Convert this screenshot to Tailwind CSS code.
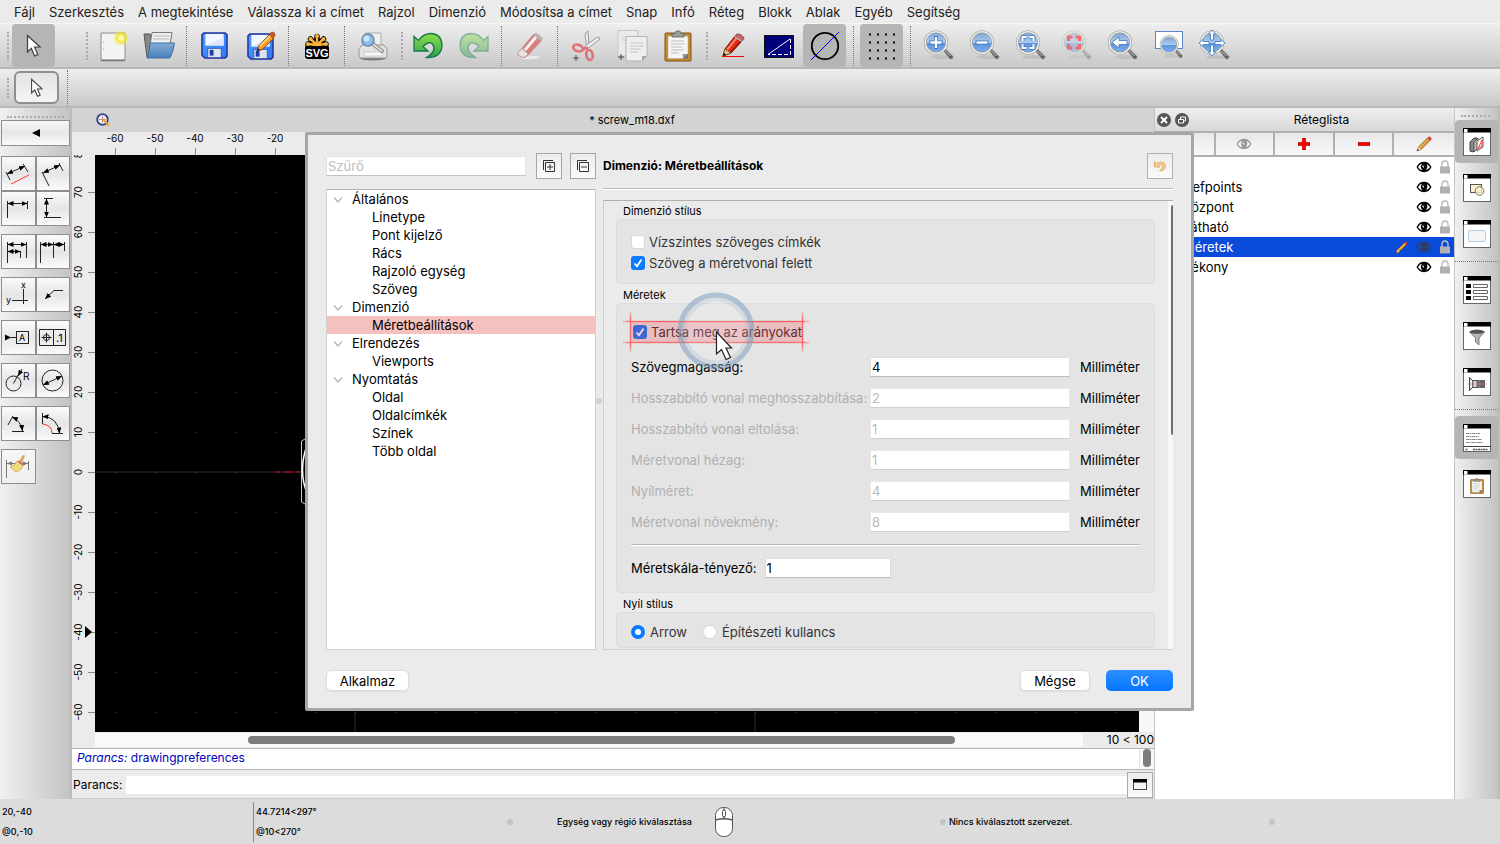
<!DOCTYPE html>
<html lang="hu">
<head>
    <meta charset="UTF-8">
    <meta name="viewport" content="width=device-width, initial-scale=1.0">
    <title>screw_m18.dxf</title>
    <script src="https://cdn.jsdelivr.net/npm/@tailwindcss/browser@4"></script>
    <style>
        body {
            font-family: 'Inter', 'Liberation Sans', sans-serif;
        }
    </style>
</head>
<body class="relative flex h-screen flex-col overflow-hidden bg-[#ebebeb] text-[13px] leading-[18px] text-black">

    <!-- Shared symbols -->
    <svg class="absolute h-0 w-0" aria-hidden="true">
        <defs>
            <linearGradient id="lens" x1="0" y1="0" x2="0" y2="1">
                <stop offset="0" stop-color="#7f9fd0"/><stop offset=".5" stop-color="#a9cbf2"/><stop offset=".52" stop-color="#5e93da"/><stop offset="1" stop-color="#7db2f0"/>
            </linearGradient>
            <linearGradient id="floppy" x1="0" y1="0" x2="1" y2="1">
                <stop offset="0" stop-color="#4f9bff"/><stop offset="1" stop-color="#2a7af5"/>
            </linearGradient>
            <linearGradient id="green" x1="0" y1="0" x2="0" y2="1">
                <stop offset="0" stop-color="#8fe04a"/><stop offset="1" stop-color="#2fa050"/>
            </linearGradient>
            <linearGradient id="folder" x1="0" y1="0" x2="0" y2="1">
                <stop offset="0" stop-color="#82add6"/><stop offset="1" stop-color="#4a80b8"/>
            </linearGradient>
            <radialGradient id="glow">
                <stop offset="0" stop-color="#fffbc8"/><stop offset=".4" stop-color="#f2e625"/><stop offset="1" stop-color="#f2e625" stop-opacity="0"/>
            </radialGradient>
            <marker id="arr" viewBox="0 0 6 5" refX="6" refY="2.500" markerWidth="6" markerHeight="5" markerUnits="userSpaceOnUse" orient="auto-start-reverse"><path d="M0 0 6 2.500 0 5z"/></marker>
            <symbol id="glass" viewBox="0 0 32 32">
                <ellipse cx="18" cy="27" rx="11" ry="2" fill="#000" opacity=".08"/>
                <path d="M20 20 22 18.500 30 26.500Q30 29.500 27 29Z" fill="#5f605a" stroke="#8b8c86" stroke-width=".8"/>
                <path d="M22.500 21 27.500 26" stroke="#c9cac4" stroke-width="1"/>
                <circle cx="13" cy="12.500" r="10.800" fill="url(#lens)" stroke="#8f918a" stroke-width="2.600"/>
                <circle cx="13" cy="12.500" r="10.800" fill="none" stroke="#e9eae4" stroke-width="1.600"/>
            </symbol>
            <symbol id="eye" viewBox="0 0 16 12">
                <path d="M.5 6Q3 .8 8 .8T15.500 6Q13 11.200 8 11.200T.5 6z" fill="currentColor"/>
                <path d="M2 6Q4.200 2.800 6 2.700 4 5 5 7.300 5.600 8.800 7 9.300 3.800 9.200 2 6zM14 6Q12.500 3.800 10.800 3 12 5 11 7.300 10.500 8.600 9.300 9.200 12.400 8.800 14 6z" fill="#fff"/>
                <path d="M7 4.500Q6.700 5.800 8 6.300" stroke="#fff" fill="none" stroke-width="1.100"/>
            </symbol>
            <symbol id="lock" viewBox="0 0 10 14">
                <path d="M2 7V4.500Q2 1 5 1T8 4.500V7" fill="none" stroke="#bdbdbd" stroke-width="1.400"/>
                <rect y="6.500" width="10" height="7" fill="#b1b1b1"/>
            </symbol>
            <symbol id="pencil" viewBox="0 0 16 16">
                <path d="M1 15 2.500 11 11.500 2 14 4.500 5 13.500z" fill="#e0962c" stroke="#7d4b12" stroke-width=".7"/>
                <path d="M3.500 12 12.500 3" stroke="#f5c678"/>
                <path d="M1 15 2.500 11 5 13.500z" fill="#ecd0a5"/><path d="M1 15 1.700 13 3 14.300z" fill="#222"/>
                <path d="M11.500 2 13 .8Q15.500 1 15.200 3.200L14 4.500z" fill="#e84040" stroke="#a33" stroke-width=".5"/>
            </symbol>
            <symbol id="cursor" viewBox="0 0 16 24">
                <path d="M1.500 1.500V18L5.300 14.400 8.600 22 11.800 20.600 8.600 13.200 14 13z" fill="#fff" stroke="#444" stroke-width="1.300"/>
            </symbol>
            <symbol id="clip" viewBox="0 0 28 32">
                <rect x="1" y="3" width="26" height="28" rx="1" fill="#c48a2f" stroke="#7d5515"/>
                <path d="M4 6H24V24L19 28.500H4z" fill="#f6f6f4" stroke="#a9a498" stroke-width=".6"/>
                <path d="M24 24 19 28.500 18.500 24z" fill="#999"/><path d="M24 24V28.500H19z" fill="#6f6f6f"/>
                <path d="M7 11H20M7 14H21M7 17H18M7 20H20M7 23H15" stroke="#bbb"/>
                <path d="M8 3.500H11Q11 .8 14 .8T17 3.500H20V7H8z" fill="#9b9d94" stroke="#60625a" stroke-width=".8"/>
            </symbol>
            <symbol id="floppy-disk" viewBox="0 0 28 28">
                <path d="M3 1H25L27 3V25L25 27H4L1 24V3z" fill="url(#floppy)" stroke="#1f2f9c" stroke-width="1.500"/>
                <path d="M4.500 2H23.500V14H4.500z" fill="#f2f6ff"/><path d="M4.500 14 23.500 6V14z" fill="#dde6fa"/>
                <path d="M7 17H21V26.500H7z" fill="#dfe3ee" stroke="#2d49b8" stroke-width=".8"/>
                <path d="M9 18.500H13V24.500H9z" fill="#1d3cae"/>
            </symbol>
            <symbol id="win" viewBox="0 0 28 28">
                <rect x=".5" y=".5" width="27" height="27" fill="#fff" stroke="#666"/>
                <path d="M0 0H28V4.500H0z"/><path d="M1 1H4.500V4.500H1z" fill="#fff"/>
            </symbol>
        </defs>
    </svg>

    <!-- Menu bar -->
    <nav class="flex h-6 shrink-0 items-center gap-[14px] border-b border-[#f6f6f6] px-[14px] text-[#222]">
        <a href="#">Fájl</a>
        <a href="#">Szerkesztés</a>
        <a href="#">A megtekintése</a>
        <a href="#">Válassza ki a címet</a>
        <a href="#">Rajzol</a>
        <a href="#">Dimenzió</a>
        <a href="#">Módosítsa a címet</a>
        <a href="#">Snap</a>
        <a href="#">Infó</a>
        <a href="#">Réteg</a>
        <a href="#">Blokk</a>
        <a href="#">Ablak</a>
        <a href="#">Egyéb</a>
        <a href="#">Segítség</a>
    </nav>

    <!-- Main toolbar -->
    <div role="toolbar" class="flex h-[45px] shrink-0 items-center gap-[3px] border-b-2 border-[#b8b8b8] bg-linear-to-b from-[#eeeeee] to-[#c9c9c9] pl-[7px]">
        <div class="h-7 w-[2px] border-l-2 border-dotted border-[#aaa]"></div>
        <button aria-label="Kijelölés" class="grid h-[43px] w-[43px] shrink-0 place-items-center rounded-[4px] bg-[#b5b5b5]"><svg class="h-6 w-4"><use href="#cursor"/></svg></button>
        <div class="ml-6 flex h-7 w-[6px] justify-end"><div class="w-[2px] border-l-2 border-dotted border-[#aaa]"></div></div>
        <button aria-label="Új" class="grid h-[43px] w-[43px] shrink-0 place-items-center">
            <svg class="h-8 w-8" viewBox="0 0 32 32"><path d="M4 3H28V30H4z" fill="#f3f3f1" stroke="#8f8f88"/><path d="M4 30.500H28" stroke="#777" stroke-width="1.500"/><path d="M6.500 11V13M6.500 18V20" stroke="#ccc"/><circle cx="24" cy="8" r="8" fill="url(#glow)"/><circle cx="24" cy="8" r="3" fill="#fff9a0"/></svg>
        </button>
        <button aria-label="Megnyitás" class="grid h-[43px] w-[43px] shrink-0 place-items-center">
            <svg class="h-8 w-8" viewBox="0 0 32 32"><path d="M1 4H7L8 7H12V27H4z" fill="#888" stroke="#555"/><path d="M9 2.500H29L26 22H6z" fill="#eee" stroke="#777"/><path d="M11 6H27M10 9H26" stroke="#bbb"/><path d="M7 13H31.500Q30 22 27.500 27 27 28 26 28H4Q6 24 7 13z" fill="url(#folder)" stroke="#3d6ea5"/></svg>
        </button>
        <div class="flex h-10 w-[7px] justify-center"><div class="border-l border-dotted border-[#777]"></div></div>
        <button aria-label="Mentés" class="grid h-[43px] w-[43px] shrink-0 place-items-center"><svg class="h-[27px] w-[27px]"><use href="#floppy-disk"/></svg></button>
        <button aria-label="Mentés másként" class="grid h-[43px] w-[43px] shrink-0 place-items-center">
            <svg class="h-8 w-8" viewBox="0 0 32 32"><use href="#floppy-disk" x="2" y="3" width="27" height="27"/><path d="M12 21 13.500 16 25 4 29 8 17 19.500z" fill="#f6a42c" stroke="#8a3b10"/><path d="M15 16 26 5" stroke="#fde08a" stroke-width="1.500"/><path d="M24 4.500 27 2Q30 2 30 5.500L28 8z" fill="#d8571c" stroke="#8a3b10" stroke-width=".7"/><path d="M12 21 13 18 15 20z" fill="#222"/></svg>
        </button>
        <div class="flex h-10 w-[7px] justify-center"><div class="border-l border-dotted border-[#777]"></div></div>
        <button aria-label="SVG" class="grid h-[43px] w-[43px] shrink-0 place-items-center">
            <svg class="h-8 w-8" viewBox="0 0 32 32">
                <g stroke="#000" stroke-width="5.500" stroke-linecap="round"><path d="M16 16V6.500M16 16 9.500 9M16 16 22.500 9M16 16 7 14M16 16 25 14"/></g>
                <path d="M7 15H25Q28 15 28 18V26Q28 29 25 29H7Q4 29 4 26V18Q4 15 7 15z"/>
                <g stroke="#f9b13a" stroke-width="2.400" stroke-linecap="round"><path d="M16 15V6M16 15 9.500 9M16 15 22.500 9M16 15 7 14M16 15 25 14"/></g>
                <g fill="#f9b13a"><circle cx="16" cy="6" r="2"/><circle cx="9.500" cy="9" r="2"/><circle cx="22.500" cy="9" r="2"/><circle cx="7" cy="14" r="2"/><circle cx="25" cy="14" r="2"/></g>
                <path d="M5 16.500H27V28H5z"/>
                <text x="16" y="27" font-size="11" font-weight="700" fill="#fff" text-anchor="middle" font-family="Liberation Sans">SVG</text>
            </svg>
        </button>
        <div class="flex h-10 w-[7px] justify-center"><div class="border-l border-dotted border-[#777]"></div></div>
        <button aria-label="Nyomtatási kép" class="grid h-[43px] w-[43px] shrink-0 place-items-center">
            <svg class="h-8 w-8" viewBox="0 0 32 32"><ellipse cx="16" cy="28" rx="13" ry="2.500" fill="#777"/><path d="M8 3H24V17H8z" fill="#eee" stroke="#aaa"/><path d="M5 15H27L30 19V26Q30 28 28 28H4Q2 28 2 26V19z" fill="#e3e3e1" stroke="#999"/><path d="M7 22H25V26H7z" fill="#f7f7f7" stroke="#bbb" stroke-width=".6"/><path d="M16 14 25 21" stroke="#888" stroke-width="4" stroke-linecap="round"/><path d="M16 14 25 21" stroke="#ddd" stroke-width="2" stroke-linecap="round"/><circle cx="11" cy="10" r="6" fill="#8dbdeb" stroke="#6a86ad" stroke-width="1.500"/><circle cx="9.500" cy="8.500" r="3" fill="#cfe5fa"/></svg>
        </button>
        <div class="flex h-7 w-[6px] justify-end"><div class="w-[2px] border-l-2 border-dotted border-[#aaa]"></div></div>
        <button aria-label="Visszavonás" class="grid h-[43px] w-[43px] shrink-0 place-items-center">
            <svg class="h-8 w-8" viewBox="0 0 32 32"><path d="M2 6.500V21H16L11 16.500Q17 10.500 20.500 14 25.500 20.500 14.500 27.500 30 28 30 14.500 29 3.500 18.500 3.500 11 4 6.500 10.500z" fill="url(#green)" stroke="#137a45" stroke-width="1.300"/></svg>
        </button>
        <button aria-label="Újra" class="grid h-[43px] w-[43px] shrink-0 place-items-center">
            <svg class="h-8 w-8 -scale-x-100 opacity-45" viewBox="0 0 32 32"><path d="M2 6.500V21H16L11 16.500Q17 10.500 20.500 14 25.500 20.500 14.500 27.500 30 28 30 14.500 29 3.500 18.500 3.500 11 4 6.500 10.500z" fill="url(#green)" stroke="#137a45" stroke-width="1.300"/></svg>
        </button>
        <div class="flex h-10 w-[7px] justify-center"><div class="border-l border-dotted border-[#777]"></div></div>
        <button aria-label="Törlés" class="grid h-[43px] w-[43px] shrink-0 place-items-center">
            <svg class="h-8 w-8 opacity-60" viewBox="0 0 32 32"><path d="M6 28Q18 31 27 27 20 25 12 27z" fill="#fff"/><path d="M4 23 19 5Q21 3 23 4L27 7Q29 9 27 11L12 27Q9 28 6 26 3 25 4 23z" fill="#e0403c" stroke="#a55"/><path d="M11 20 22 7" stroke="#fff" stroke-width="3"/><path d="M4 23 8 18.500 14 24 11.500 27Q9 28 6 26 3 25 4 23z" fill="#f4eded" stroke="#b88"/><path d="M19 5Q21 3 23 4L27 7Q29 9 27 11z" fill="#999"/></svg>
        </button>
        <div class="flex h-10 w-[7px] justify-center"><div class="border-l border-dotted border-[#777]"></div></div>
        <button aria-label="Kivágás" class="grid h-[43px] w-[43px] shrink-0 place-items-center">
            <svg class="h-8 w-8" viewBox="0 0 32 32"><path d="M17 18 15 6Q15 2 18 1L19 17z" fill="#eee" stroke="#999"/><path d="M15 16 26 8Q30 6 30 9L17 19z" fill="#eee" stroke="#999"/><ellipse cx="8" cy="18" rx="5" ry="3.200" transform="rotate(20 8 18)" fill="none" stroke="#df7376" stroke-width="2.600"/><ellipse cx="19.500" cy="25" rx="3.200" ry="5" transform="rotate(-10 19.500 25)" fill="none" stroke="#df7376" stroke-width="2.600"/><path d="M12 19 18 18" stroke="#df7376" stroke-width="3"/><path d="M6 25V31M3 28H9" stroke="#444"/></svg>
        </button>
        <button aria-label="Másolás" class="grid h-[43px] w-[43px] shrink-0 place-items-center">
            <svg class="h-8 w-8" viewBox="0 0 32 32"><path d="M2 .5H22V26H2z" fill="#ebebeb" stroke="#c4c4c4"/><path d="M5 7H18M5 10H18" stroke="#d2d2d2"/><path d="M10 6.500H31V26L26 31H10z" fill="#efefef" stroke="#b3b3b3"/><path d="M31 26H26V31z" fill="#aaa"/><path d="M14 13H27M14 16H28M14 19H25M14 22H22" stroke="#c4c4c4"/><path d="M5 24V30M2 27H8" stroke="#444"/></svg>
        </button>
        <button aria-label="Beillesztés" class="grid h-[43px] w-[43px] shrink-0 place-items-center"><svg class="h-8 w-7"><use href="#clip"/></svg></button>
        <div class="flex h-7 w-[6px] justify-end"><div class="w-[2px] border-l-2 border-dotted border-[#aaa]"></div></div>
        <button aria-label="Rajz" class="grid h-[43px] w-[43px] shrink-0 place-items-center">
            <svg class="h-8 w-8" viewBox="0 0 32 32"><path d="M6 26 8 19 18 6 25 11 14 23z" fill="#e32a17" stroke="#6b150c"/><path d="M10 20 20 7.500" stroke="#f88a6a" stroke-width="2"/><path d="M13 23 24 11" stroke="#9d160c" stroke-width="1.500"/><path d="M6 26 8 19 14 23z" fill="#e3c08a" stroke="#6b4a20" stroke-width=".7"/><path d="M6 26 7 23 9 24.500z"/><path d="M18 6 20 4Q25 4 27 8.500L25 11z" fill="#e35b5b" stroke="#555"/><path d="M17.500 6.500 25 11.500" stroke="#bbb" stroke-width="1.500"/><path d="M5 26.500H27" stroke="#f00"/></svg>
        </button>
        <button aria-label="Vázlat" class="grid h-[43px] w-[43px] shrink-0 place-items-center">
            <svg class="h-8 w-8" viewBox="0 0 32 32"><rect x="1.500" y="5.500" width="29" height="22" fill="#00007f" stroke="#111"/><path d="M5 24.500 27 9" stroke="#fff"/><path d="M27.500 9V24.500H5" stroke="#fff" stroke-dasharray="4 2" fill="none"/></svg>
        </button>
        <button aria-label="Átmérő" class="grid h-[43px] w-[43px] shrink-0 place-items-center rounded-[4px] bg-[#b5b5b5]">
            <svg class="h-8 w-8" viewBox="0 0 32 32"><circle cx="16" cy="16" r="13.200" fill="none" stroke="#000" stroke-width="1.800"/><path d="M2 30 30 2" stroke="#00f"/></svg>
        </button>
        <div class="flex h-10 w-2 justify-center"><div class="border-l border-dotted border-[#777]"></div></div>
        <button aria-label="Rács" class="grid h-[43px] w-[43px] shrink-0 place-items-center rounded-[4px] bg-[#b5b5b5]">
            <svg class="h-8 w-8" viewBox="0 0 32 32"><path d="M3 4.500H31M3 12.500H31M3 20.500H31M3 28.500H31" stroke="#000" stroke-width="2" stroke-dasharray="2 6"/></svg>
        </button>
        <div class="flex h-10 w-2 justify-center"><div class="border-l border-dotted border-[#777]"></div></div>
        <button aria-label="Nagyítás" class="grid h-[43px] w-[43px] shrink-0 place-items-center">
            <svg class="h-8 w-8" viewBox="0 0 32 32"><use href="#glass"/><path d="M13 6V19M6.500 12.500H19.500" stroke="#3e73b8" stroke-width="4"/><path d="M13 7V18M7.500 12.500H18.500" stroke="#fff" stroke-width="2.400"/></svg>
        </button>
        <button aria-label="Kicsinyítés" class="grid h-[43px] w-[43px] shrink-0 place-items-center">
            <svg class="h-8 w-8" viewBox="0 0 32 32"><use href="#glass"/><path d="M6.500 12.500H19.500" stroke="#3e73b8" stroke-width="4"/><path d="M7.500 12.500H18.500" stroke="#fff" stroke-width="2.400"/></svg>
        </button>
        <button aria-label="Automatikus nagyítás" class="grid h-[43px] w-[43px] shrink-0 place-items-center">
            <svg class="h-8 w-8" viewBox="0 0 32 32"><use href="#glass"/><path d="M7.500 11V7H11.500M14.500 7H18.500V11M18.500 14V18H14.500M11.500 18H7.500V14" fill="none" stroke="#3e73b8" stroke-width="3.600"/><path d="M7.500 11V7H11.500M14.500 7H18.500V11M18.500 14V18H14.500M11.500 18H7.500V14" fill="none" stroke="#fff" stroke-width="2"/></svg>
        </button>
        <button aria-label="Nagyítás a kijelölésre" class="grid h-[43px] w-[43px] shrink-0 place-items-center">
            <svg class="h-8 w-8 opacity-60" viewBox="0 0 32 32"><use href="#glass" opacity=".7"/><path d="M7.500 11V7H11.500M14.500 7H18.500V11M18.500 14V18H14.500M11.500 18H7.500V14" fill="none" stroke="#f22" stroke-width="3"/></svg>
        </button>
        <button aria-label="Előző nézet" class="grid h-[43px] w-[43px] shrink-0 place-items-center">
            <svg class="h-8 w-8" viewBox="0 0 32 32"><use href="#glass"/><path d="M5 12.500 12 7V10.500H20V14.500H12V18z" fill="#fff" stroke="#3e73b8" stroke-width=".8"/></svg>
        </button>
        <button aria-label="Ablak nagyítása" class="grid h-[43px] w-[43px] shrink-0 place-items-center">
            <svg class="h-8 w-8" viewBox="0 0 32 32"><rect x="2.500" y="1.500" width="27" height="17" fill="#fff" stroke="#5b86c4"/><use href="#glass" x="6" y="5" width="25" height="25"/></svg>
        </button>
        <button aria-label="Mozgatás" class="grid h-[43px] w-[43px] shrink-0 place-items-center">
            <svg class="h-8 w-8" viewBox="0 0 32 32"><use href="#glass"/><path d="M13 0 16.500 4H14.500V10H11.500V4H9.500zM13 26 16.500 22H14.500V15H11.500V22H9.500zM0 13 4 9.500V11.500H10V14.500H4V16.500zM26 13 22 9.500V11.500H16V14.500H22V16.500z" fill="#fff" stroke="#4a80c8" stroke-width=".9"/></svg>
        </button>
    </div>

    <!-- Options toolbar -->
    <div role="toolbar" class="flex h-[39px] shrink-0 items-center border-b-2 border-[#b8b8b8] bg-linear-to-b from-[#eeeeee] to-[#c9c9c9] pl-[7px]">
        <div class="h-5 w-[7px] border-l-2 border-dotted border-[#aaa]"></div>
        <button aria-label="Kijelölés" class="grid h-[33px] w-[45px] place-items-center rounded-[6px] border-2 border-[#8e8e8e] bg-linear-to-b from-[#e4e4e4] to-[#f4f4f4]"><svg class="h-5 w-3.5"><use href="#cursor"/></svg></button>
        <div class="ml-2 h-9 border-l border-dotted border-[#777]"></div>
    </div>

    <!-- Work area -->
    <main class="flex min-h-0 flex-1">

        <!-- Dimension tools -->
        <aside class="w-[72px] shrink-0 border-r-2 border-[#bbb] bg-linear-to-r from-[#f0f0f0] to-[#c3c3c3] pt-2 pl-px">
            <div class="mx-1.5 border-t-2 border-dotted border-[#aaa]"></div>
            <button aria-label="Vissza" class="mt-[2px] grid h-[26px] w-full place-items-center border border-[#8e8e8e] bg-linear-to-b from-[#f6f6f6] via-[#e6e6e6] to-[#fafafa]"><svg class="h-2 w-2" viewBox="0 0 8 8"><path d="M0 4 8 0V8z"/></svg></button>
            <div class="mt-[10px] grid grid-cols-2">
                <button aria-label="Igazított" class="grid h-[35px] place-items-center border border-[#8e8e8e] bg-linear-to-b from-[#fafafa] via-[#e6e6e6] to-[#fafafa]"><svg class="h-7 w-7" viewBox="0 0 28 28"><g stroke="#222" fill="none"><path d="M2 12 6 20M19 4 24 12"/><path d="M3 14 21 6" marker-start="url(#arr)" marker-end="url(#arr)"/></g><path d="M7 24 25 15" stroke="#f33"/></svg></button>
                <button aria-label="Elforgatott" class="grid h-[35px] place-items-center border border-[#8e8e8e] bg-linear-to-b from-[#fafafa] via-[#e6e6e6] to-[#fafafa]"><svg class="h-7 w-7" viewBox="0 0 28 28"><g stroke="#222" fill="none"><path d="M3 12 10 26M20 3 24 11"/><path d="M4 13 21 5" marker-start="url(#arr)" marker-end="url(#arr)"/></g></svg></button>
                <button aria-label="Vízszintes" class="grid h-[35px] place-items-center border border-[#8e8e8e] bg-linear-to-b from-[#fafafa] via-[#e6e6e6] to-[#fafafa]"><svg class="h-7 w-7" viewBox="0 0 28 28"><g stroke="#222" fill="none"><path d="M3.500 6V23M23.500 6V14"/><path d="M3.500 8.500H23.500" marker-start="url(#arr)" marker-end="url(#arr)"/></g></svg></button>
                <button aria-label="Függőleges" class="grid h-[35px] place-items-center border border-[#8e8e8e] bg-linear-to-b from-[#fafafa] via-[#e6e6e6] to-[#fafafa]"><svg class="h-7 w-7" viewBox="0 0 28 28"><g stroke="#222" fill="none"><path d="M5 3.500H14M5 22.500H22"/><path d="M7.500 3.500V22.500" marker-start="url(#arr)" marker-end="url(#arr)"/></g></svg></button>
            </div>
            <div class="mt-2 grid grid-cols-2">
                <button aria-label="Alapvonal" class="grid h-[35px] place-items-center border border-[#8e8e8e] bg-linear-to-b from-[#fafafa] via-[#e6e6e6] to-[#fafafa]"><svg class="h-7 w-7" viewBox="0 0 28 28"><g stroke="#222" fill="none"><path d="M3.500 4V25M22.500 4V20M16.500 13V20"/><path d="M3.500 6.500H22.500" marker-start="url(#arr)" marker-end="url(#arr)"/><path d="M3.500 13.500H16.500" marker-start="url(#arr)" marker-end="url(#arr)"/></g></svg></button>
                <button aria-label="Folytatott" class="grid h-[35px] place-items-center border border-[#8e8e8e] bg-linear-to-b from-[#fafafa] via-[#e6e6e6] to-[#fafafa]"><svg class="h-7 w-7" viewBox="0 0 28 28"><g stroke="#222" fill="none"><path d="M1.500 4V25M14.500 4V20M25.500 4V13"/><path d="M1.500 6.500H14.500" marker-start="url(#arr)" marker-end="url(#arr)"/><path d="M14.500 6.500H25.500" marker-start="url(#arr)" marker-end="url(#arr)"/></g></svg></button>
            </div>
            <div class="mt-2 grid grid-cols-2">
                <button aria-label="Ordináta" class="grid h-[35px] place-items-center border border-[#8e8e8e] bg-linear-to-b from-[#fafafa] via-[#e6e6e6] to-[#fafafa]"><svg class="h-[33px] w-8" viewBox="0 0 32 33"><path d="M10 22.500H26M21.500 11V26" stroke="#222"/><text x="19" y="10" font-size="9">x</text><text x="4" y="25" font-size="9">y</text></svg></button>
                <button aria-label="Mutató" class="grid h-[35px] place-items-center border border-[#8e8e8e] bg-linear-to-b from-[#fafafa] via-[#e6e6e6] to-[#fafafa]"><svg class="h-7 w-7" viewBox="0 0 28 28"><path d="M24 9.500H15L6 18" stroke="#222" fill="none" marker-end="url(#arr)"/></svg></button>
            </div>
            <div class="mt-2 grid grid-cols-2">
                <button aria-label="Alapelem" class="grid h-[35px] place-items-center border border-[#8e8e8e] bg-linear-to-b from-[#fafafa] via-[#e6e6e6] to-[#fafafa]"><svg class="h-7 w-7" viewBox="0 0 28 28"><path d="M1 10.500 7 13.500 1 16.500z"/><g stroke="#222" fill="none"><path d="M6 13.500H12"/><rect x="12.500" y="7.500" width="12" height="12"/></g><text x="15" y="17" font-size="9">A</text></svg></button>
                <button aria-label="Tűrés" class="grid h-[35px] place-items-center border border-[#8e8e8e] bg-linear-to-b from-[#fafafa] via-[#e6e6e6] to-[#fafafa]"><svg class="h-7 w-7" viewBox="0 0 28 28"><g stroke="#222" fill="none"><path d="M.5 5.500H26.500V21.500H.5zM14.500 5.500V21.500M2.500 13.500H12.500M7.500 8.500V18.500"/><circle cx="7.500" cy="13.500" r="3"/></g><text x="17" y="18" font-size="11">.1</text></svg></button>
            </div>
            <div class="mt-2 grid grid-cols-2">
                <button aria-label="Sugár" class="grid h-[35px] place-items-center border border-[#8e8e8e] bg-linear-to-b from-[#fafafa] via-[#e6e6e6] to-[#fafafa]"><svg class="h-7 w-7" viewBox="0 0 28 28"><g stroke="#222" fill="none"><circle cx="9.500" cy="16.500" r="7.500"/><path d="M9.500 16.500 14 8"/><path d="M18 2 14 9" marker-end="url(#arr)"/></g><text x="19" y="13" font-size="10">R</text></svg></button>
                <button aria-label="Átmérő" class="grid h-[35px] place-items-center border border-[#8e8e8e] bg-linear-to-b from-[#fafafa] via-[#e6e6e6] to-[#fafafa]"><svg class="h-7 w-7" viewBox="0 0 28 28"><g stroke="#222" fill="none"><circle cx="13.500" cy="13.500" r="10.500"/><path d="M4 18 23 9" marker-start="url(#arr)" marker-end="url(#arr)"/></g></svg></button>
            </div>
            <div class="mt-2 grid grid-cols-2">
                <button aria-label="Szög" class="grid h-[35px] place-items-center border border-[#8e8e8e] bg-linear-to-b from-[#fafafa] via-[#e6e6e6] to-[#fafafa]"><svg class="h-7 w-7" viewBox="0 0 28 28"><g stroke="#222" fill="none"><path d="M4 15 9 6M8 21.500H20"/><path d="M8 7Q17 11 18.500 21" marker-start="url(#arr)" marker-end="url(#arr)"/></g></svg></button>
                <button aria-label="Ívhossz" class="grid h-[35px] place-items-center border border-[#8e8e8e] bg-linear-to-b from-[#fafafa] via-[#e6e6e6] to-[#fafafa]"><svg class="h-7 w-7" viewBox="0 0 28 28"><g stroke="#222" fill="none"><path d="M3.500 3V14M13 23.500H24"/><path d="M3.500 6.500Q19 7 20.500 23.500" marker-start="url(#arr)" marker-end="url(#arr)"/></g><path d="M3.500 14Q13 15 13 23" stroke="#f33" fill="none"/></svg></button>
            </div>
            <div class="mt-2 grid grid-cols-2">
                <button aria-label="Tisztítás" class="grid h-[35px] place-items-center border border-[#8e8e8e] bg-linear-to-b from-[#f6f6f6] to-[#efefef]"><svg class="h-7 w-7" viewBox="0 0 28 28"><g stroke="#777" fill="#777"><path d="M2.500 7V25M24.500 8V17M2.500 10.500H24.500"/><path d="M3 10.500 8 8.500V12.500zM24 10.500 19 8.500V12.500z" stroke="none"/></g><path d="M15 9 18 3Q20 1 21 3L18 10z" fill="#d9a86a"/><path d="M13 8 19 12Q18 17 12 19L6 14Q11 13 13 8z" fill="#f0dc7e" stroke="#c9ac44" stroke-width=".8"/><path d="M14 8 19.500 12" stroke="#d66" stroke-width="1.800"/></svg></button>
            </div>
        </aside>

        <!-- Document -->
        <section class="flex min-w-0 flex-1 flex-col">
            <div class="grid h-6 shrink-0 grid-cols-[1fr_auto_1fr] items-center bg-[#d3d3d3] pl-6 text-[11px]">
                <svg class="h-[14px] w-[14px]" viewBox="0 0 14 14"><circle cx="6.500" cy="6.500" r="5.300" fill="#f4f4f8" stroke="#2f4585" stroke-width="1.800"/><path d="M6.500 3V10M3 6.500H10" stroke="#c88"/><path d="M7 6 13 13" stroke="#f0a030" stroke-width="2"/></svg>
                <span class="pl-[14px]">* screw_m18.dxf</span>
            </div>
            <div class="grid min-h-0 flex-1 grid-cols-[23px_1fr_15px] grid-rows-[23px_1fr_16px]">
                <div></div>
                <svg class="h-full w-full" font-size="10" text-anchor="middle">
                    <text x="20" y="10">-60</text><text x="60" y="10">-50</text><text x="100" y="10">-40</text><text x="140" y="10">-30</text><text x="180" y="10">-20</text>
                    <path d="M20.500 16V23M60.500 16V23M100.500 16V23M140.500 16V23M180.500 16V23" stroke="#888"/>
                </svg>
                <div></div>
                <svg class="h-full w-full" font-size="10" text-anchor="middle">
                    <g transform="rotate(-90)">
                        <text x="3" y="10">80</text><text x="-37" y="10">70</text><text x="-77" y="10">60</text><text x="-117" y="10">50</text><text x="-157" y="10">40</text><text x="-197" y="10">30</text><text x="-237" y="10">20</text><text x="-277" y="10">10</text><text x="-317" y="10">0</text><text x="-357" y="10">-10</text><text x="-397" y="10">-20</text><text x="-437" y="10">-30</text><text x="-477" y="10">-40</text><text x="-517" y="10">-50</text><text x="-557" y="10">-60</text>
                    </g>
                    <path d="M16 37.500H23M16 77.500H23M16 117.500H23M16 157.500H23M16 197.500H23M16 237.500H23M16 277.500H23M16 317.500H23M16 357.500H23M16 397.500H23M16 437.500H23M16 477.500H23M16 517.500H23M16 557.500H23" stroke="#888"/>
                    <path d="M13 471 20 477 13 483z"/>
                </svg>
                <svg class="h-full w-full bg-black">
                    <defs><pattern id="dots" width="40" height="40" x="20" y="37" patternUnits="userSpaceOnUse"><rect width="1" height="1" fill="#444"/></pattern></defs>
                    <path d="M0 317H900M260 0V900M660 0V900" stroke="#161616" stroke-width="2"/>
                    <rect width="100%" height="100%" fill="url(#dots)"/>
                    <path d="M180 317H212" stroke="#7a1018" stroke-width="2" stroke-dasharray="5 2 1 2 8 2"/>
                    <path d="M210 284 206.500 286V347L210 349" stroke="#ccc" fill="none"/><path d="M212 290Q203 316 212 338" stroke="#fff" fill="none" stroke-width="1.500"/>
                </svg>
                <div class="bg-[#f8f8f8]"></div>
                <div></div>
                <div class="flex items-center">
                    <div class="flex h-[14px] min-w-0 flex-1 items-center bg-[#f9f9f9] pr-32 pl-[153px]"><div class="h-2 w-full rounded-full bg-[#7c7c7c]"></div></div>
                    <span class="-mr-[15px] w-[71px] text-right text-[12px] whitespace-nowrap">10 &lt; 100</span>
                </div>
                <div></div>
            </div>
            <!-- Command line -->
            <div class="flex h-[22px] shrink-0 justify-between border-y border-[#b4b4b4] bg-white pl-[5px] text-[12px] text-[#0000c0]">
                <p><i>Parancs:</i> drawingpreferences</p>
                <div class="w-[15px] border-l border-[#e4e4e4] bg-[#f8f8f8] pl-[3px]"><div class="h-[18px] w-2 rounded-full bg-[#7c7c7c]"></div></div>
            </div>
            <div class="flex h-[29px] shrink-0 items-center gap-1 border-b border-[#c8c8c8] pt-px pr-px pl-px">
                <label for="command" class="text-[12px]">Parancs:</label>
                <div class="flex flex-1 items-center">
                    <input id="command" type="text" class="h-[18px] min-w-0 flex-1 bg-white">
                    <button aria-label="Parancsablak" class="grid h-[26px] w-[26px] place-items-center border border-[#aaa] bg-linear-to-b from-[#eee] to-[#fafafa]"><svg class="h-[11px] w-[14px]" viewBox="0 0 14 11"><rect x=".5" y=".5" width="13" height="10" fill="none" stroke="#444"/><path d="M0 0H14V3.500H0z"/></svg></button>
                </div>
            </div>
        </section>

        <!-- Layer list -->
        <section class="flex w-[301px] shrink-0 flex-col border-r border-l border-[#c4c4c4] bg-white">
            <header class="grid h-[23px] shrink-0 grid-cols-[1fr_auto_1fr] items-center bg-linear-to-b from-[#eee] to-[#d8d8d8] pl-[2px] text-[12px]">
                <div class="flex gap-1">
                    <button aria-label="Bezárás"><svg class="h-[14px] w-[14px]" viewBox="0 0 14 14"><circle cx="7" cy="7" r="7" fill="#555"/><path d="M4 4 10 10M10 4 4 10" stroke="#fff" stroke-width="2"/></svg></button>
                    <button aria-label="Leválasztás"><svg class="h-[14px] w-[14px]" viewBox="0 0 14 14"><circle cx="7" cy="7" r="7" fill="#555"/><path d="M3.500 6.500H8.500V10H3.500zM5.500 6V4H10.500V8H9" fill="none" stroke="#fff"/></svg></button>
                </div>
                <h2 class="pl-8">Réteglista</h2>
            </header>
            <div class="grid h-[26px] shrink-0 grid-cols-5 divide-x-2 divide-[#b0b0b0] border-y-2 border-[#b0b0b0] bg-linear-to-b from-[#e8e8e8] to-[#f8f8f8] pl-px">
                <button aria-label="Összes réteg mutatása" class="grid place-items-center"><svg class="h-3 w-4"><use href="#eye"/></svg></button>
                <button aria-label="Összes réteg elrejtése" class="grid place-items-center text-[#999]"><svg class="h-3 w-4"><use href="#eye"/></svg></button>
                <button aria-label="Réteg hozzáadása" class="grid place-items-center"><svg class="h-3 w-3" viewBox="0 0 12 12"><path d="M6 0V12M0 6H12" stroke="#a00" stroke-width="3.600"/><path d="M6 .6V11.400M.6 6H11.400" stroke="#f00" stroke-width="2.400"/></svg></button>
                <button aria-label="Réteg eltávolítása" class="grid place-items-center"><svg class="h-3 w-3" viewBox="0 0 12 12"><path d="M0 6H12" stroke="#a00" stroke-width="3.600"/><path d="M.6 6H11.400" stroke="#f00" stroke-width="2.400"/></svg></button>
                <button aria-label="Réteg szerkesztése" class="grid place-items-center"><svg class="h-4 w-4"><use href="#pencil"/></svg></button>
            </div>
            <ul>
                <li class="flex h-5 items-center gap-2 pr-1 pl-7"><span class="flex-1">0</span><svg class="h-3 w-4"><use href="#eye"/></svg><svg class="h-[14px] w-[10px]"><use href="#lock"/></svg></li>
                <li class="flex h-5 items-center gap-2 pr-1 pl-7"><span class="flex-1">Defpoints</span><svg class="h-3 w-4"><use href="#eye"/></svg><svg class="h-[14px] w-[10px]"><use href="#lock"/></svg></li>
                <li class="flex h-5 items-center gap-2 pr-1 pl-7"><span class="flex-1">Központ</span><svg class="h-3 w-4"><use href="#eye"/></svg><svg class="h-[14px] w-[10px]"><use href="#lock"/></svg></li>
                <li class="flex h-5 items-center gap-2 pr-1 pl-7"><span class="flex-1">Látható</span><svg class="h-3 w-4"><use href="#eye"/></svg><svg class="h-[14px] w-[10px]"><use href="#lock"/></svg></li>
                <li class="flex h-5 items-center gap-2 bg-[#084bda] pr-1 pl-7 text-white"><span class="flex-1">Méretek</span><svg class="h-[13px] w-[13px]"><use href="#pencil"/></svg>
                    <svg class="h-3 w-4" viewBox="0 0 16 12"><path d="M.5 6Q3 .8 8 .8T15.500 6Q13 11.200 8 11.200T.5 6z" fill="#2c3d66"/><path d="M2 6Q4.200 2.800 6 2.700 4 5 5 7.300 5.600 8.800 7 9.300 3.800 9.200 2 6zM14 6Q12.500 3.800 10.800 3 12 5 11 7.300 10.500 8.600 9.300 9.200 12.400 8.800 14 6z" fill="#1c4cb8"/></svg>
                    <svg class="h-[14px] w-[10px]"><use href="#lock"/></svg></li>
                <li class="flex h-5 items-center gap-2 pr-1 pl-7"><span class="flex-1">Vékony</span><svg class="h-3 w-4"><use href="#eye"/></svg><svg class="h-[14px] w-[10px]"><use href="#lock"/></svg></li>
            </ul>
        </section>

        <!-- Dock toggles -->
        <aside class="flex w-[45px] shrink-0 flex-col gap-[3px] border-r-2 border-[#bbb] bg-linear-to-r from-[#f0f0f0] to-[#c3c3c3] pt-[7px]">
            <div class="mr-2 ml-[6px] border-t-2 border-dotted border-[#aaa]"></div>
            <button aria-label="Réteglista" class="grid h-[43px] place-items-center rounded-[4px] bg-[#b5b5b5]"><svg class="h-7 w-7" viewBox="0 0 28 28"><use href="#win"/><path d="M7 14 11 10H14V20L10 24 7 23z" fill="#888" stroke="#444"/><path d="M11 14 15 10V20L11 24z" fill="#bbb" stroke="#444" stroke-width=".8"/><path d="M14 13 20 9V19L14 23z" fill="#fff" stroke="#555"/><path d="M15 21 19 12V18z" fill="none" stroke="#f33"/></svg></button>
            <button aria-label="Blokklista" class="grid h-[43px] place-items-center"><svg class="h-7 w-7" viewBox="0 0 28 28"><use href="#win"/><rect x="7.500" y="10.500" width="11" height="8" fill="#fbeecb" stroke="#555"/><circle cx="16.500" cy="17" r="4.300" fill="#fbeecb" fill-opacity=".8" stroke="#776"/></svg></button>
            <button aria-label="Nézetlista" class="grid h-[43px] place-items-center"><svg class="h-7 w-7" viewBox="0 0 28 28"><use href="#win"/><rect x="5.500" y="10.500" width="17" height="11" rx="1.500" fill="#f5f5f5" stroke="#b9cfe2"/></svg></button>
            <div class="my-[3px] h-0 border-t border-dotted border-[#777]"></div>
            <button aria-label="Tulajdonságok" class="grid h-[43px] place-items-center"><svg class="h-7 w-7" viewBox="0 0 28 28"><use href="#win"/><path d="M3 8H8V12H3zM3 14H8V18H3zM3 20H8V24H3z"/><path d="M10.500 8.500H24.500V11.500H10.500zM10.500 14.500H24.500V17.500H10.500zM10.500 20.500H24.500V23.500H10.500z" fill="none" stroke="#666"/></svg></button>
            <button aria-label="Szűrő" class="grid h-[43px] place-items-center"><svg class="h-7 w-7" viewBox="0 0 28 28"><use href="#win"/><path d="M6.500 10Q14 6 21.500 10L16 16V23L12.500 20V16z" fill="#b4b4b4" stroke="#666" stroke-width=".8"/><ellipse cx="14" cy="9.800" rx="7.500" ry="2" fill="#555"/></svg></button>
            <button aria-label="Vetítő" class="grid h-[43px] place-items-center"><svg class="h-7 w-7" viewBox="0 0 28 28"><use href="#win"/><path d="M6.500 9.500V22.500L10 19V13z" fill="#eee" stroke="#444"/><path d="M10 12.500H14V19.500H10z" fill="#ddd" stroke="#555"/><path d="M14 12H22V20H14z" fill="#666"/><path d="M16 12V20" stroke="#888"/><path d="M4 16H24" stroke="#f88" stroke-opacity=".7" stroke-dasharray="2 1"/></svg></button>
            <div class="my-[3px] h-0 border-t border-dotted border-[#777]"></div>
            <button aria-label="Parancssor" class="grid h-[43px] place-items-center rounded-[4px] bg-[#b5b5b5]"><svg class="h-7 w-7" viewBox="0 0 28 28"><use href="#win"/><path d="M3 9.500H17M3 12.500H16M3 15.500H19M3 18.500H20" stroke="#888" stroke-width="1" stroke-dasharray="3 .5 2 .5"/><path d="M0 22.500H28" stroke="#444"/><path d="M2.500 25.500H5M10 25.500H25" stroke="#555" stroke-width="1.500" stroke-dasharray="2 .5"/></svg></button>
            <button aria-label="Vágólap" class="grid h-[43px] place-items-center"><svg class="h-7 w-7" viewBox="0 0 28 28"><use href="#win"/><use href="#clip" x="7" y="8" width="14" height="16"/></svg></button>
        </aside>
    </main>

    <!-- Status bar -->
    <footer class="grid h-[45px] shrink-0 grid-cols-[253fr_254fr_433fr_329fr_231fr] items-center bg-[#dcdcdc] text-[9px] font-medium">
        <div class="flex h-10 flex-col justify-around pl-[2px]"><span>20,-40</span><span>@0,-10</span></div>
        <div class="flex h-10 flex-col justify-around border-l border-[#888] pl-[2px]"><span>44.7214&lt;297°</span><span>@10&lt;270°</span></div>
        <div class="flex items-center">
            <span class="mr-11 h-[6px] w-[6px] rounded-full bg-[#c4c4c4]"></span>
            <span class="mr-[22px]">Egység vagy régió kiválasztása</span>
            <svg class="h-8 w-5" viewBox="0 0 20 32"><rect x="1.500" y="1.500" width="17" height="29" rx="8" fill="#fff" stroke="#555"/><path d="M1.500 14Q10 11.500 18.500 14" fill="none" stroke="#555" stroke-width="1.500"/><path d="M10 1V4M10 10V13" stroke="#444"/><rect x="8.500" y="4" width="3" height="7" rx="1.500" fill="#fff" stroke="#444"/></svg>
        </div>
        <div class="flex items-center gap-[3px]"><span class="h-[6px] w-[6px] rounded-full bg-[#c4c4c4]"></span><span>Nincs kiválasztott szervezet.</span></div>
        <div><span class="block h-[6px] w-[6px] rounded-full bg-[#c4c4c4]"></span></div>
    </footer>

    <!-- Preferences dialog -->
    <div role="dialog" aria-label="Rajz beállítások" class="absolute top-[132px] right-[306px] bottom-[133px] left-[305px] flex flex-col rounded-[2px] border-[3px] border-[#a6a6a6] bg-[#ebebeb] px-[18px] pt-[18px] pb-[17px]">
        <div class="flex min-h-0 flex-1 gap-[7px]">
            <div class="flex w-[270px] shrink-0 flex-col">
                <div class="flex h-[26px] items-center">
                    <input type="text" placeholder="Szűrő" aria-label="Szűrő" class="h-5 min-w-0 flex-1 border border-b-[#c4c4c4] border-[#e2e2e2] bg-white px-px placeholder:text-[#bcbcbc]">
                    <button aria-label="Összes kibontása" class="ml-[10px] grid h-[26px] w-[26px] place-items-center border border-[#a6a6a6] bg-linear-to-b from-[#ececec] to-[#fafafa]"><svg class="h-3 w-3" viewBox="0 0 12 12"><path d="M.5 10V.5H10M2.500 2.500H11.500V11.500H2.500zM4 7H10M7 4V10" fill="none" stroke="#333"/></svg></button>
                    <button aria-label="Összes összecsukása" class="ml-2 grid h-[26px] w-[26px] place-items-center border border-[#a6a6a6] bg-linear-to-b from-[#ececec] to-[#fafafa]"><svg class="h-3 w-3" viewBox="0 0 12 12"><path d="M.5 10V.5H10M2.500 2.500H11.500V11.500H2.500zM4 7H10" fill="none" stroke="#333"/></svg></button>
                </div>
                <ul class="mt-[10px] flex-1 border border-t-[#b4b4b4] border-[#d0d0d0] bg-white">
                    <li class="flex items-center gap-[9px] pl-[6px]"><svg class="h-[9px] w-[10px]" viewBox="0 0 10 9"><path d="M1 2.500 5 7 9 2.500" fill="none" stroke="#b4b4b4" stroke-width="1.300"/></svg>Általános</li>
                    <li class="pl-[45px]">Linetype</li>
                    <li class="pl-[45px]">Pont kijelző</li>
                    <li class="pl-[45px]">Rács</li>
                    <li class="pl-[45px]">Rajzoló egység</li>
                    <li class="pl-[45px]">Szöveg</li>
                    <li class="flex items-center gap-[9px] pl-[6px]"><svg class="h-[9px] w-[10px]" viewBox="0 0 10 9"><path d="M1 2.500 5 7 9 2.500" fill="none" stroke="#b4b4b4" stroke-width="1.300"/></svg>Dimenzió</li>
                    <li class="bg-[#f5c1bf] pl-[45px]">Méretbeállítások</li>
                    <li class="flex items-center gap-[9px] pl-[6px]"><svg class="h-[9px] w-[10px]" viewBox="0 0 10 9"><path d="M1 2.500 5 7 9 2.500" fill="none" stroke="#b4b4b4" stroke-width="1.300"/></svg>Elrendezés</li>
                    <li class="pl-[45px]">Viewports</li>
                    <li class="flex items-center gap-[9px] pl-[6px]"><svg class="h-[9px] w-[10px]" viewBox="0 0 10 9"><path d="M1 2.500 5 7 9 2.500" fill="none" stroke="#b4b4b4" stroke-width="1.300"/></svg>Nyomtatás</li>
                    <li class="pl-[45px]">Oldal</li>
                    <li class="pl-[45px]">Oldalcímkék</li>
                    <li class="pl-[45px]">Színek</li>
                    <li class="pl-[45px]">Több oldal</li>
                </ul>
            </div>

            <div class="relative flex min-w-0 flex-1 flex-col">
                <span class="absolute top-[245px] -left-[7px] h-[6px] w-[6px] rounded-full bg-[#cfcfcf]"></span>
                <header class="flex h-[26px] shrink-0 items-center justify-between">
                    <h1 class="text-[12px] font-bold">Dimenzió: Méretbeállítások</h1>
                    <button aria-label="Visszaállítás" class="grid h-[26px] w-[26px] place-items-center border border-[#b0b0b0] bg-linear-to-b from-[#ececec] to-[#fafafa]"><svg class="h-3 w-3" viewBox="0 0 12 12"><path d="M.5 1.500V7H6L4.300 5.300Q6.500 3.500 8.300 5.200 9.500 8 5.500 10.800 11.500 10.500 11.500 6 11 2 7 2 4.500 2 2.500 3.500z" fill="#f8cf93" stroke="#dca050" stroke-width=".8"/></svg></button>
                </header>
                <div class="mt-[9px] h-[2px] shrink-0 border-b border-white bg-[#b8b8b8]"></div>
                <div class="mt-[10px] flex min-h-0 flex-1 border border-t-[#b0b0b0] border-r-0 border-[#cfcfcf]">
                    <form class="min-w-0 flex-1 overflow-hidden pr-[13px] pl-3">
                        <fieldset class="min-w-0">
                            <legend class="pt-[3px] pl-[7px] text-[11px] leading-[15px]">Dimenzió stílus</legend>
                            <div class="flex h-[65px] flex-col justify-center gap-[5px] rounded-[5px] border border-[#dcdcdc] bg-[#e4e4e4] px-[14px] pt-[2px] leading-4">
                                <label class="flex items-center gap-1 text-[#333]"><input type="checkbox" class="h-[14px] w-[14px] appearance-none rounded-[3px] border border-[#d6d6d6] bg-white">Vízszintes szöveges címkék</label>
                                <label class="flex items-center gap-1 text-[#333]"><span class="grid"><input type="checkbox" checked class="col-start-1 row-start-1 h-[14px] w-[14px] appearance-none rounded-[3px] bg-[#0a7bff]"><svg class="pointer-events-none col-start-1 row-start-1 h-[14px] w-[14px]" viewBox="0 0 14 14"><path d="M3.500 7.500 6 10.300 10.500 3.500" fill="none" stroke="#fff" stroke-width="1.800"/></svg></span>Szöveg a méretvonal felett</label>
                            </div>
                        </fieldset>
                        <fieldset class="min-w-0">
                            <legend class="pt-1 pl-[7px] text-[11px] leading-[15px]">Méretek</legend>
                            <div class="rounded-[5px] border border-[#dcdcdc] bg-[#e4e4e4] px-[14px] pt-[18px] pb-[14px]">
                                <div class="relative mb-[15px] flex h-5 items-center">
                                    <label class="flex items-center gap-1 pl-[2px] text-[#333]"><span class="grid"><input type="checkbox" checked class="col-start-1 row-start-1 h-[14px] w-[14px] appearance-none rounded-[3px] bg-[#0a7bff]"><svg class="pointer-events-none col-start-1 row-start-1 h-[14px] w-[14px]" viewBox="0 0 14 14"><path d="M3.500 7.500 6 10.300 10.500 3.500" fill="none" stroke="#fff" stroke-width="1.800"/></svg></span>Tartsa meg az arányokat</label>
                                    <!-- Click highlight and pointer -->
                                    <svg class="pointer-events-none absolute -top-[34px] -left-[10px] h-[88px] w-[190px]" viewBox="0 0 190 88">
                                        <rect x="10" y="33" width="172" height="21" fill="#ff2a38" fill-opacity=".2"/>
                                        <path d="M2 33.500H188M2 54.500H188M9.500 24V64M181.500 24V64" stroke="#ff3a3a" stroke-opacity=".25" stroke-width="2"/>
                                        <path d="M6 33.500H184M6 54.500H184M9.500 28V60M181.500 28V60" stroke="#f33" stroke-opacity=".55"/>
                                        <circle cx="95" cy="43" r="32" fill="#fff" fill-opacity=".12"/>
                                        <circle cx="95" cy="43" r="34" fill="none" stroke="#7ba0c0" stroke-opacity=".18" stroke-width="9"/>
                                        <circle cx="95" cy="43" r="36" fill="none" stroke="#7598b8" stroke-opacity=".4" stroke-width="5"/>
                                        <path d="M95.500 44V66L100.500 61.500 105 71.500 109.500 69.500 105 60H110.500z" fill="#fff" stroke="#222" stroke-width="1.200"/>
                                    </svg>
                                </div>
                                <div class="grid grid-cols-[229px_200px_minmax(0,1fr)] items-center gap-x-[10px] gap-y-[11px] leading-5 whitespace-nowrap">
                                    <label for="text-height">Szövegmagasság:</label>
                                    <input id="text-height" type="text" value="4" class="h-5 min-w-0 border border-b-[#bcbcbc] border-[#dcdcdc] bg-white px-px">
                                    <span>Milliméter</span>
                                    <label for="ext-length" class="text-[#b0b0b0]">Hosszabbító vonal meghosszabbítása:</label>
                                    <input id="ext-length" type="text" value="2" disabled class="h-5 min-w-0 border border-b-[#d0d0d0] border-[#e8e8e8] bg-white px-px text-[#bbb]">
                                    <span>Milliméter</span>
                                    <label for="ext-offset" class="text-[#b0b0b0]">Hosszabbító vonal eltolása:</label>
                                    <input id="ext-offset" type="text" value="1" disabled class="h-5 min-w-0 border border-b-[#d0d0d0] border-[#e8e8e8] bg-white px-px text-[#bbb]">
                                    <span>Milliméter</span>
                                    <label for="dim-gap" class="text-[#b0b0b0]">Méretvonal hézag:</label>
                                    <input id="dim-gap" type="text" value="1" disabled class="h-5 min-w-0 border border-b-[#d0d0d0] border-[#e8e8e8] bg-white px-px text-[#bbb]">
                                    <span>Milliméter</span>
                                    <label for="arrow-size" class="text-[#b0b0b0]">Nyílméret:</label>
                                    <input id="arrow-size" type="text" value="4" disabled class="h-5 min-w-0 border border-b-[#d0d0d0] border-[#e8e8e8] bg-white px-px text-[#bbb]">
                                    <span>Milliméter</span>
                                    <label for="dim-step" class="text-[#b0b0b0]">Méretvonal növekmény:</label>
                                    <input id="dim-step" type="text" value="8" disabled class="h-5 min-w-0 border border-b-[#d0d0d0] border-[#e8e8e8] bg-white px-px text-[#bbb]">
                                    <span>Milliméter</span>
                                </div>
                                <div class="my-3 h-[2px] border-b border-white bg-[#b8b8b8]"></div>
                                <div class="flex items-center gap-2">
                                    <label for="scale">Méretskála-tényező:</label>
                                    <input id="scale" type="text" value="1" class="h-5 w-[126px] border border-b-[#bcbcbc] border-[#dcdcdc] bg-white px-px">
                                </div>
                            </div>
                        </fieldset>
                        <fieldset class="min-w-0">
                            <legend class="pt-1 pl-[7px] text-[11px] leading-[15px]">Nyíl stílus</legend>
                            <div class="flex h-9 items-center gap-4 rounded-[5px] border border-[#dcdcdc] bg-[#e4e4e4] px-[14px] pt-1 text-[#333]">
                                <label class="flex items-center gap-[5px]"><input type="radio" name="arrow" checked class="h-[14px] w-[14px] appearance-none rounded-full border-4 border-[#0a7bff] bg-white">Arrow</label>
                                <label class="flex items-center gap-[5px]"><input type="radio" name="arrow" class="h-[14px] w-[14px] appearance-none rounded-full border border-[#d6d6d6] bg-white">Építészeti kullancs</label>
                            </div>
                        </fieldset>
                    </form>
                    <div class="flex w-[5px] justify-end bg-[#f8f8f8] pt-1"><div class="h-[230px] w-[2px] rounded-l-full bg-[#6f6f6f]"></div></div>
                </div>
            </div>
        </div>
        <div class="mt-5 flex gap-4">
            <button class="h-[21px] w-[83px] rounded-[5px] border border-[#dcdcdc] bg-white leading-4 shadow-xs">Alkalmaz</button>
            <button class="ml-auto h-[21px] w-[70px] rounded-[5px] border border-[#dcdcdc] bg-white leading-4 shadow-xs">Mégse</button>
            <button class="h-[21px] w-[67px] rounded-[5px] bg-linear-to-b from-[#2a90ff] to-[#0074ff] leading-4 text-white">OK</button>
        </div>
    </div>

</body>
</html>
